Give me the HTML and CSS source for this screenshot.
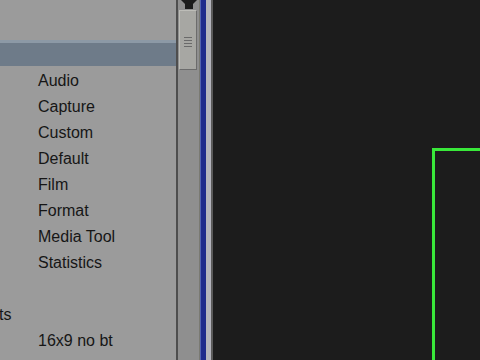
FILE: index.html
```html
<!DOCTYPE html>
<html lang="en">

<head>
    <meta charset="UTF-8">
    <title>Settings</title>
    <link rel="stylesheet" href="styles.css">
</head>

<body>
    <div class="window">
        <div class="list-panel">
            <div class="row"></div>
            <div class="row selected"></div>
            <div class="row item">Audio</div>
            <div class="row item">Capture</div>
            <div class="row item">Custom</div>
            <div class="row item">Default</div>
            <div class="row item">Film</div>
            <div class="row item">Format</div>
            <div class="row item">Media Tool</div>
            <div class="row item">Statistics</div>
            <div class="row"></div>
            <div class="row group">ts</div>
            <div class="row item">16x9 no bt</div>
        </div>
        <div class="divider"></div>
        <div class="scrollbar">
            <svg class="arrow" width="20" height="9" viewBox="0 0 20 9">
                <path d="M2 0 L18 0 L14 4 L14 9 L6 9 L6 4 Z" fill="#1c1c1c"/>
            </svg>
            <div class="thumb">
                <div class="grip"></div>
                <div class="grip"></div>
                <div class="grip"></div>
                <div class="grip"></div>
            </div>
        </div>
        <div class="edge-blue"></div>
        <div class="edge-light"></div>
        <div class="viewer">
            <div class="frame"></div>
        </div>
    </div>
</body>

</html>
```

FILE: styles.css
```css
body {
    margin: 0;
    background: #1c1c1c;
    font-family: "Liberation Sans", Arial, sans-serif;
    overflow: hidden;
}

.window {
    display: flex;
    height: 360px;
    overflow: hidden;
}

.list-panel {
    width: 176px;
    background: #9b9b9b;
    padding-top: 14px;
    box-sizing: border-box;
    overflow: hidden;
}

.row {
    height: 26px;
    display: flex;
    align-items: center;
    padding-top: 3px;
    box-sizing: border-box;
    font-size: 16px;
    color: #161616;
}

.item {
    padding-left: 38px;
}

.group {
    margin-left: -1px;
}

.selected {
    background: #6e7b89;
    border-top: 3px solid #8c99a6;
}

.divider {
    width: 2px;
    background: #4e4e4e;
}

.scrollbar {
    width: 22px;
    background: #8f8f8f;
    border-right: 1px solid #7a7a72;
    padding-left: 1px;
    box-sizing: border-box;
}

.arrow {
    display: block;
}

.thumb {
    width: 18px;
    height: 60px;
    margin-top: 1px;
    background: #a7a7a3;
    border: 1px solid #bdbdb8;
    border-bottom-color: #6c6c6c;
    border-right-color: #6c6c6c;
    box-sizing: border-box;
    display: flex;
    flex-direction: column;
    align-items: center;
    gap: 2px;
    padding-top: 26px;
}

.grip {
    width: 8px;
    height: 1px;
    background: #6a6a6a;
}

.edge-blue {
    width: 6px;
    background: #1e2a8c;
    box-shadow: inset 1px 0 0 #5060b0;
}

.edge-light {
    width: 5px;
    background: #b4b4bc;
    border-right: 2px solid #5a5a5a;
}

.viewer {
    flex: 1;
    background: #1c1c1c;
    padding: 148px 0 0 219px;
    overflow: hidden;
}

.frame {
    height: 240px;
    border-top: 3px solid #39e83a;
    border-left: 3px solid #39e83a;
}
```
